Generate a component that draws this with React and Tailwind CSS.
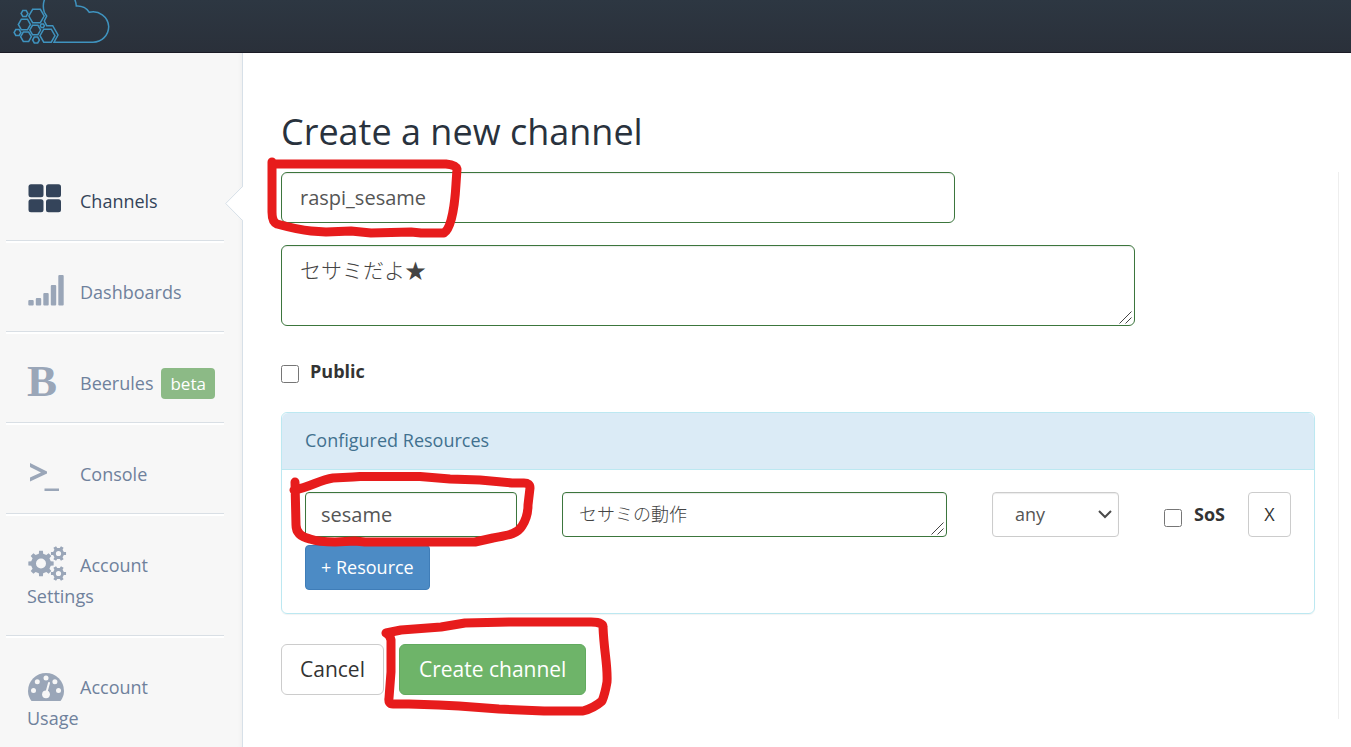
import { useState } from "react";

const hexagons = [
  [24.5, 13.5, 3.4],
  [36.5, 16, 7.7],
  [24.4, 24.5, 6.1],
  [35.2, 30, 5.4],
  [42.3, 25.8, 2.1],
  [17.5, 32.5, 3.4],
  [26, 36.7, 5.4],
  [36, 40, 3.4],
  [47.5, 35.7, 7.5],
];

function hexPoints([cx, cy, r]) {
  return Array.from({ length: 6 }, (_, i) => {
    const a = (i * Math.PI) / 3;
    return `${(cx + r * Math.cos(a)).toFixed(2)},${(cy + r * Math.sin(a)).toFixed(2)}`;
  }).join(" ");
}

function gearPoints(cx, cy, outer, inner, teeth) {
  const step = (2 * Math.PI) / teeth;
  return Array.from({ length: teeth }, (_, i) => {
    const a = i * step;
    return [
      [inner, -0.28],
      [outer, -0.19],
      [outer, 0.19],
      [inner, 0.28],
    ]
      .map(([r, o]) => {
        const x = cx + r * Math.cos(a + o * step);
        const y = cy + r * Math.sin(a + o * step);
        return `${x.toFixed(2)} ${y.toFixed(2)}`;
      })
      .join("L");
  }).join("L");
}

function gear(cx, cy, outer, inner, hole, teeth) {
  return `M${gearPoints(cx, cy, outer, inner, teeth)}Z M${cx - hole} ${cy}a${hole} ${hole} 0 1 0 ${hole * 2} 0a${hole} ${hole} 0 1 0 ${-hole * 2} 0Z`;
}

function Logo() {
  return (
    <svg
      className="block h-[52px] w-[120px]"
      viewBox="0 0 120 52"
      fill="none"
      stroke="#3f93bf"
      strokeWidth="1.5"
      role="img"
      aria-label="Home"
    >
      {hexagons.map((h) => (
        <polygon key={h.join()} points={hexPoints(h)} />
      ))}
      <path d="M54 42.200H93A15.700 15.700 0 0 0 108.700 26.500A15.700 15.700 0 0 0 89.300 12.300C87 8.500 82 5.500 76.300 6C75.500 -4 68 -12 60 -12C49 -12 40.500 0 44.300 12.300L46.700 16L44.300 21L46.700 25.700H52.700L58 35Z" />
    </svg>
  );
}

function NavIcon({ children }) {
  return (
    <svg
      className="inline-block h-[31px] w-[53px] overflow-visible align-top"
      viewBox="0 0 53 31"
      fill="currentColor"
      aria-hidden="true"
    >
      {children}
    </svg>
  );
}

function ChannelsIcon() {
  return (
    <NavIcon>
      <rect x="1.5" y="-1.7" width="15" height="13" rx="2.5" />
      <rect x="19" y="-1.7" width="15" height="13" rx="2.5" />
      <rect x="1.5" y="13.3" width="15" height="13" rx="2.5" />
      <rect x="19" y="13.3" width="15" height="13" rx="2.5" />
    </NavIcon>
  );
}

function SignalIcon() {
  return (
    <NavIcon>
      <rect x="1.3" y="23" width="5.4" height="5.6" rx="1" />
      <rect x="8.8" y="21" width="5.4" height="7.6" rx="1" />
      <rect x="16.3" y="16" width="5.4" height="12.6" rx="1" />
      <rect x="23.8" y="8" width="5.4" height="20.6" rx="1" />
      <rect x="31.3" y="-2" width="5.4" height="30.6" rx="1" />
    </NavIcon>
  );
}

function BoldIcon() {
  return (
    <span
      className="inline-block h-[31px] w-[53px] align-top font-['Liberation_Serif',serif] text-[45px] leading-[26px] font-bold"
      aria-hidden="true"
    >
      B
    </span>
  );
}

function ConsoleIcon() {
  return (
    <NavIcon>
      <path d="M3 4L20 12.5V14.5L3 22.5V18.5L14 13.5L3 8Z" />
      <rect x="17.5" y="29.5" width="14.5" height="2.5" />
    </NavIcon>
  );
}

function CogsIcon() {
  return (
    <NavIcon>
      <path
        fillRule="evenodd"
        d={[
          gear(14, 13.5, 12.8, 10, 5, 8),
          gear(31.5, 3.5, 7.7, 5.6, 2.6, 6),
          gear(31.5, 23.5, 7.7, 5.6, 2.6, 6),
        ].join(" ")}
      />
    </NavIcon>
  );
}

function GaugeIcon() {
  return (
    <NavIcon>
      <path d="M4.5 29Q1 24.500 1 19A18 18 0 0 1 37 19Q37 24.500 33.500 29Z" />
      <g fill="#f7f7f7">
        <circle cx="6.500" cy="18.600" r="2.500" />
        <circle cx="10.300" cy="9.700" r="2.500" />
        <circle cx="19" cy="6" r="2.500" />
        <circle cx="27.900" cy="9.700" r="2.500" />
        <circle cx="31.500" cy="18.600" r="2.500" />
        <circle cx="19" cy="22.300" r="3.900" />
      </g>
      <path d="M19 22L22 11" stroke="#f7f7f7" strokeWidth="2" strokeLinecap="round" />
    </NavIcon>
  );
}

const navItems = [
  { label: "Channels", Icon: ChannelsIcon, active: true },
  { label: "Dashboards", Icon: SignalIcon },
  { label: "Beerules", Icon: BoldIcon, badge: "beta" },
  { label: "Console", Icon: ConsoleIcon },
  { label: "Account Settings", Icon: CogsIcon },
  { label: "Account Usage", Icon: GaugeIcon },
];

function NavItem({ label, Icon, badge, active }) {
  return (
    <li className="relative border-b border-[#d9dfe5] pt-9 pr-8 pb-[23px] pl-[21px] shadow-[0_2px_0_#ffffff] last:border-0 last:pb-0 last:shadow-none">
      <a
        href="#"
        className={
          active
            ? "block leading-[31px] font-medium text-[#34445a]"
            : "block leading-[31px] text-[#6f819c]"
        }
      >
        <span className={active ? "text-[#34445a]" : "text-[#9aa6b8]"}>
          <Icon />
        </span>
        {badge ? (
          <span className="-mr-8 inline-flex gap-2 align-top">
            {label}
            <span className="rounded bg-[#8cba86] px-[9px] text-[17px] text-white">
              {badge}
            </span>
          </span>
        ) : (
          label
        )}
      </a>
      {active && (
        <svg
          className="absolute top-[36px] -right-[19px] h-[35px] w-[18px]"
          viewBox="0 0 18 35"
          aria-hidden="true"
        >
          <path d="M18 0.500L1 17.500L18 34.500Z" fill="#fff" />
          <path d="M17.500 0.500L0.700 17.500L17.500 34.500" fill="none" stroke="#d7e0e8" />
        </svg>
      )}
    </li>
  );
}

// Hand-drawn marker, in pixels from the top left corner of its parent
function Marker({ d }) {
  return (
    <svg
      className="pointer-events-none absolute top-0 left-0 z-10 h-px w-px overflow-visible"
      fill="none"
      stroke="#e71c1c"
      strokeWidth="9"
      strokeLinecap="round"
      strokeLinejoin="round"
      aria-hidden="true"
    >
      <path d={d} />
    </svg>
  );
}

function Grip() {
  return (
    <svg
      className="pointer-events-none absolute right-[3px] bottom-[2px] size-[13px]"
      viewBox="0 0 13 13"
      stroke="#444444"
      aria-hidden="true"
    >
      <path d="M0.500 12.500L12.500 0.500M6.500 12.500L12.500 6.500" />
    </svg>
  );
}

function ResourceRow() {
  const [access, setAccess] = useState("any");

  return (
    <div className="flex items-start gap-[45px]">
      <div className="relative min-w-0 flex-[212]">
        <input
          type="text"
          aria-label="Resource name"
          defaultValue="sesame"
          className="block h-[45px] w-full rounded border border-[#3c763d] px-[15px] text-[20px] text-[#555555] shadow-[inset_0_1px_1px_rgba(0,0,0,0.08)]"
        />
        <Marker d="M-10 -10L-9 33Q-9 44 5 47Q14 50 30 50L50 49L60 50H170L188 46C206 43 213 41 217 34Q223 25 223 13L225 -4Q225 -9 219 -9L207 -9L175 -12L145 -13L115 -15.500H55L48 -15L28 -14C14 -12 6 -5 -11 -2" />
      </div>
      <div className="relative min-w-0 flex-[385]">
        <textarea
          aria-label="Resource description"
          defaultValue="セサミの動作"
          className="block h-[45px] w-full resize-none overflow-hidden rounded border border-[#3c763d] px-4 py-[7px] text-[18px] leading-[28px] font-light text-[#444444] shadow-[inset_0_1px_1px_rgba(0,0,0,0.08)]"
        />
        <Grip />
      </div>
      <div className="relative">
        <select
          aria-label="Resource access"
          value={access}
          onChange={(e) => setAccess(e.target.value)}
          className="block h-[45px] w-[127px] appearance-none rounded border border-[#cccccc] bg-white pl-[22px] text-[#555555] shadow-[inset_0_1px_1px_rgba(0,0,0,0.08)]"
        >
          <option value="any">any</option>
          <option value="read">read</option>
          <option value="write">write</option>
        </select>
        <svg
          className="pointer-events-none absolute top-[18px] right-[7px] h-[9px] w-[14px]"
          viewBox="0 0 14 9"
          fill="none"
          stroke="#4a4a4a"
          strokeWidth="2"
          aria-hidden="true"
        >
          <path d="M1 1L7 7L13 1" />
        </svg>
      </div>
      <div className="flex h-[45px] items-center gap-[23px]">
        <label className="flex items-center gap-3 font-bold text-[#333333]">
          <input type="checkbox" className="mt-[6px] size-[18px]" />
          SoS
        </label>
        <button
          type="button"
          className="h-[45px] w-[43px] rounded border border-[#cccccc] bg-white text-[#333333]"
        >
          X
        </button>
      </div>
    </div>
  );
}

function App() {
  return (
    <div className="flex min-h-screen flex-col bg-white font-['Open_Sans','Noto_Sans_CJK_JP',sans-serif] text-[18px] text-[#333333]">
      <header className="h-[53px] border-b border-[#1b1b26] bg-linear-to-b from-[#2d3742] to-[#2a303a]">
        <a href="#" className="inline-block">
          <Logo />
        </a>
      </header>

      <div className="flex flex-1">
        <nav className="w-[243px] shrink-0 border-r border-[#d7e0e8] bg-[#f7f7f7] pt-[97px] pr-[18px] pl-[6px] shadow-[inset_-4px_0_4px_-3px_rgba(0,0,0,0.04)]">
          <ul>
            {navItems.map((item) => (
              <NavItem key={item.label} {...item} />
            ))}
          </ul>
        </nav>

        <main className="min-w-0 flex-1 pt-[53px] pr-3 pb-[27px] pl-[38px]">
          <h1 className="mb-[14px] text-[36px] leading-[52px] text-[#29323d]">
            Create a new channel
          </h1>

          <form
            onSubmit={(e) => e.preventDefault()}
            className="border-r border-[#eeeeee] pr-[23px] pb-6"
          >
            <div className="relative mb-[22px] max-w-[674px]">
              <input
                type="text"
                aria-label="Channel name"
                defaultValue="raspi_sesame"
                className="block h-[51px] w-full rounded-md border border-[#3c763d] px-[18px] text-[20px] text-[#555555] shadow-[inset_0_1px_1px_rgba(0,0,0,0.08)]"
              />
              <Marker d="M-9 -10V40Q-9 50 -4 52Q18 58 30 59L45 60L70 59L90 61L130 60L140 61H163C171 56 174 30 175 12L176 -3Q175 -7 165 -8H-7" />
            </div>

            <div className="relative max-w-[854px]">
              <textarea
                aria-label="Channel description"
                defaultValue="セサミだよ★"
                className="block h-[81px] w-full resize-none rounded-md border border-[#3c763d] px-[18px] py-[9px] text-[21px] leading-[31px] font-light text-[#444444] shadow-[inset_0_1px_1px_rgba(0,0,0,0.08)]"
              />
              <Grip />
            </div>

            <label className="mt-[33px] mb-[28px] flex w-fit items-center gap-[11px] leading-[25px] font-bold">
              <input type="checkbox" className="mt-1 size-[18px]" />
              Public
            </label>

            <section className="mb-[30px] rounded-md border border-[#bce8f1] shadow-[0_1px_1px_rgba(0,0,0,0.05)]">
              <h2 className="rounded-t-md border-b border-[#bce8f1] bg-[#dbebf6] px-[23px] pt-[14px] pb-4 leading-[26px] text-[#41718f]">
                Configured Resources
              </h2>
              <div className="px-[23px] pt-[22px] pb-[23px]">
                <ResourceRow />
                <button
                  type="button"
                  className="mt-2 h-[45px] rounded border border-[#3f7db8] bg-[#4c8bc5] px-[15px] text-white"
                >
                  + Resource
                </button>
              </div>
            </section>

            <div className="flex gap-[15px]">
              <button
                type="button"
                className="h-[51px] rounded-md border border-[#cccccc] bg-white px-[18px] text-[21px]"
              >
                Cancel
              </button>
              <div className="relative">
                <button
                  type="submit"
                  className="h-[51px] rounded-md border border-[#62aa5f] bg-[#6eb469] px-[19px] text-[21px] text-white"
                >
                  Create channel
                </button>
                <Marker d="M-13 -11L2 -14L42 -17L66 -21L110 -22H192Q204 -22 204 -17C205 8 209 22 208 38Q206 50 203 57Q195 64 184 67H145L100 65L60 62L40 61L10 60H-6Q-11 60 -10 54L-8 28V-4Q-9 -9 -13 -11" />
              </div>
            </div>
          </form>
        </main>
      </div>
    </div>
  );
}

export default App;
